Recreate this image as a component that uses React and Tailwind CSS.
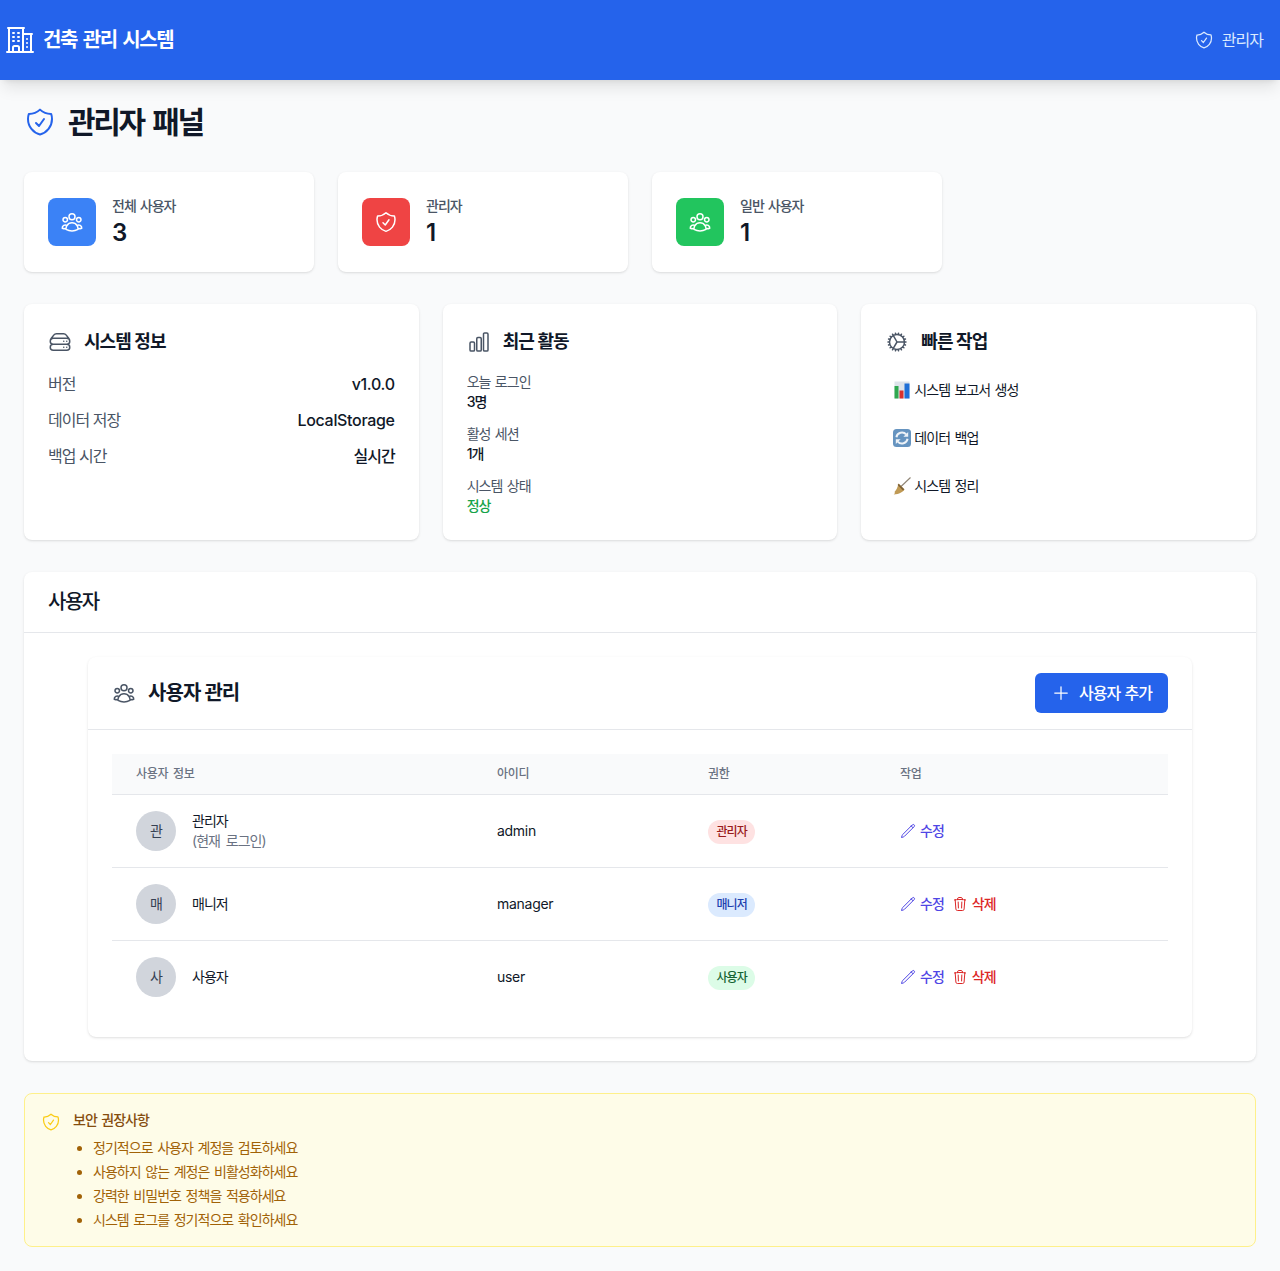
import {
  HiOutlineBuildingOffice2,
  HiOutlineShieldCheck,
  HiOutlineUserGroup,
  HiOutlineServerStack,
  HiOutlineChartBar,
  HiOutlineCog,
  HiOutlinePlus,
  HiOutlinePencil,
  HiOutlineTrash,
} from "react-icons/hi2";

const stats = [
  { label: "전체 사용자", value: "3", color: "bg-[#3b82f6]", Icon: HiOutlineUserGroup },
  { label: "관리자", value: "1", color: "bg-[#ef4444]", Icon: HiOutlineShieldCheck },
  { label: "일반 사용자", value: "1", color: "bg-[#22c55e]", Icon: HiOutlineUserGroup },
];

const users = [
  { initial: "관", name: "관리자", note: "(현재 로그인)", id: "admin", role: "관리자", badge: "bg-[#fee2e2] text-[#991b1b]", canDelete: false },
  { initial: "매", name: "매니저", id: "manager", role: "매니저", badge: "bg-[#dbeafe] text-[#1e40af]", canDelete: true },
  { initial: "사", name: "사용자", id: "user", role: "사용자", badge: "bg-[#dcfce7] text-[#166534]", canDelete: true },
];

const tips = [
  "정기적으로 사용자 계정을 검토하세요",
  "사용하지 않는 계정은 비활성화하세요",
  "강력한 비밀번호 정책을 적용하세요",
  "시스템 로그를 정기적으로 확인하세요",
];

function ChartEmoji() {
  return (
    <svg viewBox="0 0 18 18" className="w-[18px] h-[18px] shrink-0">
      <rect x="1.5" y="0.5" width="15" height="17" fill="#dde3ea" />
      <rect x="1.5" y="5" width="4" height="12.5" fill="#2fa84f" />
      <rect x="6.5" y="9.5" width="4" height="8" fill="#d9302c" />
      <rect x="11.5" y="2.5" width="5" height="15" fill="#1f6fd6" />
    </svg>
  );
}

function RefreshEmoji() {
  return (
    <svg viewBox="0 0 18 18" className="w-[18px] h-[18px] shrink-0">
      <rect x="0" y="0" width="18" height="18" rx="3.5" fill="#6694c0" />
      <path d="M3.4 8.2a5.7 5.7 0 0 1 9.8-2.8" fill="none" stroke="#eef3f8" strokeWidth="2" />
      <path d="M15.2 3v4.8h-4.8z" fill="#eef3f8" />
      <path d="M14.6 9.8a5.7 5.7 0 0 1-9.8 2.8" fill="none" stroke="#eef3f8" strokeWidth="2" />
      <path d="M2.8 15v-4.8h4.8z" fill="#eef3f8" />
    </svg>
  );
}

function BroomEmoji() {
  return (
    <svg viewBox="0 0 18 18" className="w-[18px] h-[18px] shrink-0">
      <path d="M8 9.5L17.5 0.5" stroke="#8f8474" strokeWidth="1.1" />
      <path d="M5.5 6.5l6 6c-1.4 2.6-5.4 4.6-10.8 5 1.4-1.2 1.4-2 .8-2.6 1.6-1.2 3.2-4.6 4-8.4z" fill="#c09a55" />
      <path d="M5.7 6.7l5.6 5.6-1.3 1.2-5.4-5.4z" fill="#7d6136" />
    </svg>
  );
}

function Card({ children, className = "" }) {
  return <div className={`bg-white rounded-lg shadow-sm ${className}`}>{children}</div>;
}

function CardTitle({ Icon, children }) {
  return (
    <h3 className="flex items-center gap-3 mb-4 text-lg font-semibold text-gray-900">
      <Icon className="w-6 h-6 text-gray-600" />
      {children}
    </h3>
  );
}

function InfoRow({ label, value }) {
  return (
    <div className="flex justify-between">
      <span className="text-gray-600">{label}</span>
      <span className="font-medium text-gray-900">{value}</span>
    </div>
  );
}

function Activity({ label, value, valueClass = "text-gray-900" }) {
  return (
    <div className="text-sm [word-spacing:0.1em]">
      <p className="text-gray-600">{label}</p>
      <p className={`font-medium ${valueClass}`}>{value}</p>
    </div>
  );
}

function QuickAction({ Icon, children }) {
  return (
    <button className="flex items-center gap-[3px] w-full px-2 py-2 text-sm text-left text-gray-900 rounded [word-spacing:0.1em]">
      <Icon />
      {children}
    </button>
  );
}

export default function App() {
  return (
    <div className="min-h-screen bg-[#f9fafb] font-['Inter','Noto_Sans_CJK_KR',sans-serif] tracking-[-0.06em]">
      {/* Header */}
      <header className="h-20 flex items-center justify-between pl-1 pr-[17px] bg-[#2563eb] shadow-lg">
        <div className="flex items-center gap-[7px]">
          <HiOutlineBuildingOffice2 className="w-8 h-8 text-white" />
          <span className="text-xl font-semibold text-white tracking-[-0.07em] [word-spacing:0.1em]">건축 관리 시스템</span>
        </div>
        <div className="flex items-center gap-2 text-[#dbeafe]">
          <HiOutlineShieldCheck className="w-5 h-5" />
          <span>관리자</span>
        </div>
      </header>

      <main className="p-6">
        <h1 className="flex items-center gap-3 mb-8 text-3xl font-bold text-gray-900 tracking-[-0.08em] [word-spacing:0.13em]">
          <HiOutlineShieldCheck className="w-8 h-8 text-[#2563eb]" />
          관리자 패널
        </h1>

        {/* Stats */}
        <div className="grid grid-cols-4 gap-6 mb-8">
          {stats.map(({ label, value, color, Icon }) => (
            <Card key={label} className="flex items-center gap-4 h-[100px] px-6">
              <div className={`flex items-center justify-center w-12 h-12 rounded-lg ${color}`}>
                <Icon className="w-6 h-6 text-white" />
              </div>
              <div>
                <p className="text-sm font-medium text-gray-600 [word-spacing:0.08em]">{label}</p>
                <p className="mt-px text-2xl font-semibold text-gray-900 tracking-normal">{value}</p>
              </div>
            </Card>
          ))}
        </div>

        {/* Info panels */}
        <div className="grid grid-cols-3 gap-6 mb-8">
          <Card className="p-6">
            <CardTitle Icon={HiOutlineServerStack}>시스템 정보</CardTitle>
            <div className="space-y-3">
              <InfoRow label="버전" value={<span className="tracking-[-0.02em]">v1.0.0</span>} />
              <InfoRow label="데이터 저장" value={<span className="tracking-[-0.02em]">LocalStorage</span>} />
              <InfoRow label="백업 시간" value="실시간" />
            </div>
          </Card>
          <Card className="p-6">
            <CardTitle Icon={HiOutlineChartBar}>최근 활동</CardTitle>
            <div className="space-y-3">
              <Activity label="오늘 로그인" value="3명" />
              <Activity label="활성 세션" value="1개" />
              <Activity label="시스템 상태" value="정상" valueClass="text-[#16a34a]" />
            </div>
          </Card>
          <Card className="p-6">
            <CardTitle Icon={HiOutlineCog}>빠른 작업</CardTitle>
            <div className="space-y-3">
              <QuickAction Icon={ChartEmoji}>시스템 보고서 생성</QuickAction>
              <QuickAction Icon={RefreshEmoji}>데이터 백업</QuickAction>
              <QuickAction Icon={BroomEmoji}>시스템 정리</QuickAction>
            </div>
          </Card>
        </div>

        {/* Users */}
        <Card className="mb-8">
          <div className="px-6 py-4 border-b border-gray-200">
            <h2 className="text-xl font-medium text-gray-900 tracking-[-0.075em]">사용자</h2>
          </div>
          <div className="px-16 py-6">
            <Card>
              <div className="flex items-center justify-between px-6 py-4 border-b border-gray-200">
                <h3 className="flex items-center gap-3 text-xl font-semibold text-gray-900">
                  <HiOutlineUserGroup className="w-6 h-6 text-gray-600" />
                  사용자 관리
                </h3>
                <button className="flex items-center gap-2 h-10 px-4 rounded-md bg-[#2563eb] text-white font-medium [word-spacing:0.05em]">
                  <HiOutlinePlus className="w-5 h-5" />
                  사용자 추가
                </button>
              </div>
              <div className="p-6">
                <table className="w-full table-fixed">
                  <thead className="bg-gray-50 border-b border-gray-200">
                    <tr className="text-left text-xs text-gray-500 tracking-[-0.025em] [word-spacing:0.15em]">
                      <th className="w-[361px] px-6 py-3 font-medium">사용자 정보</th>
                      <th className="w-[211px] px-6 py-3 font-medium">아이디</th>
                      <th className="w-[192px] px-6 py-3 font-medium">권한</th>
                      <th className="px-6 py-3 font-medium">작업</th>
                    </tr>
                  </thead>
                  <tbody className="divide-y divide-gray-200 text-sm text-gray-900 [word-spacing:0.1em]">
                    {users.map((user) => (
                      <tr key={user.id}>
                        <td className="px-6 py-4">
                          <div className="flex items-center gap-4">
                            <div className="flex items-center justify-center w-10 h-10 rounded-full bg-gray-300 text-gray-700">
                              {user.initial}
                            </div>
                            <div>
                              <p>{user.name}</p>
                              {user.note && <p className="text-gray-500 [word-spacing:0.2em]">{user.note}</p>}
                            </div>
                          </div>
                        </td>
                        <td className="px-6 py-4 tracking-[-0.02em]">{user.id}</td>
                        <td className="px-6 py-4">
                          <span className={`flex items-center w-fit h-6 mt-0.5 px-[8.5px] rounded-full text-xs font-medium ${user.badge}`}>
                            {user.role}
                          </span>
                        </td>
                        <td className="px-6 py-4">
                          <div className="flex items-center gap-2 font-medium">
                            <button className="flex items-center gap-1 text-[#4f46e5]">
                              <HiOutlinePencil className="w-4 h-4" />
                              수정
                            </button>
                            {user.canDelete && (
                              <button className="flex items-center gap-1 text-[#dc2626]">
                                <HiOutlineTrash className="w-4 h-4" />
                                삭제
                              </button>
                            )}
                          </div>
                        </td>
                      </tr>
                    ))}
                  </tbody>
                </table>
              </div>
            </Card>
          </div>
        </Card>

        {/* Security notice */}
        <div className="flex gap-3 p-4 rounded-lg border border-[#fef08a] bg-[#fefce8] [word-spacing:0.1em]">
          <HiOutlineShieldCheck className="w-5 h-5 mt-0.5 text-[#facc15]" />
          <div>
            <h3 className="text-sm font-medium text-[#854d0e]">보안 권장사항</h3>
            <ul className="mt-2 pl-5 space-y-1 list-disc text-sm text-[#a16207]">
              {tips.map((tip) => (
                <li key={tip}>{tip}</li>
              ))}
            </ul>
          </div>
        </div>
      </main>
    </div>
  );
}
